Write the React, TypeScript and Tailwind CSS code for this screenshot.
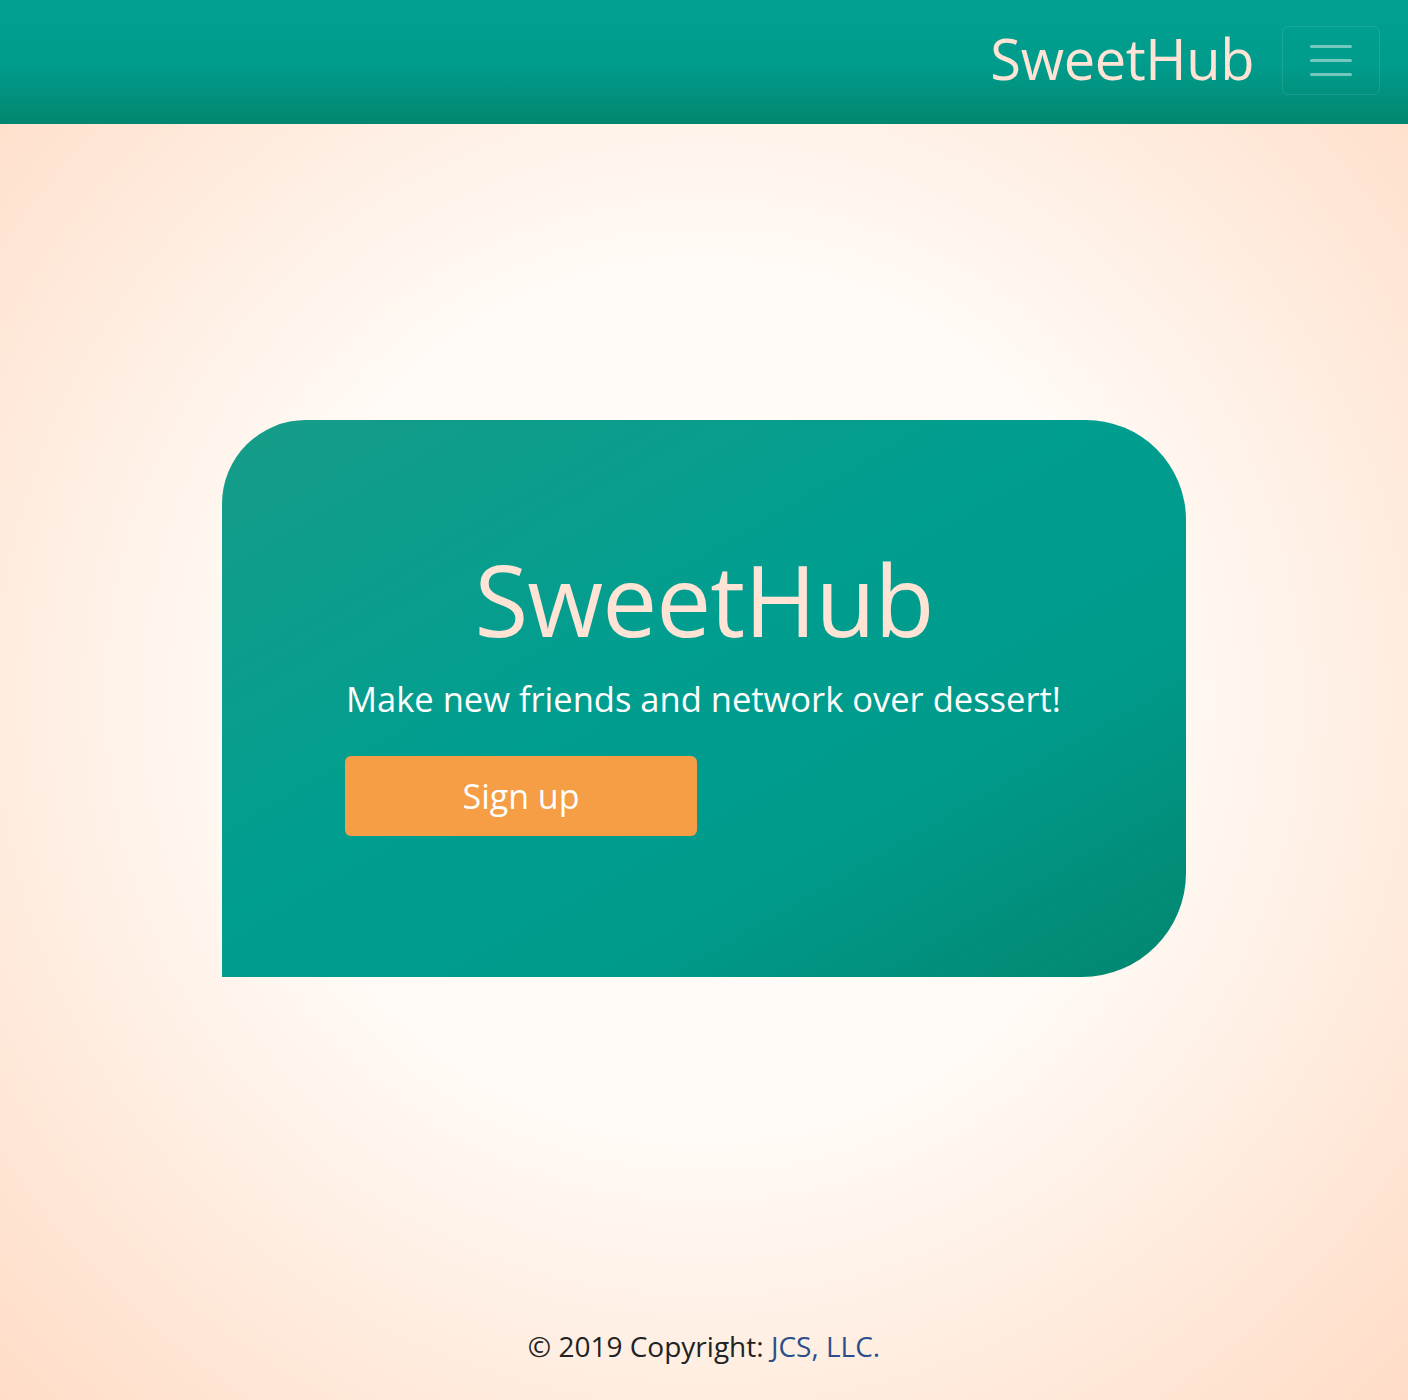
export default function App() {
  return (
    <div
      className="min-h-[1400px] flex flex-col bg-[radial-gradient(ellipse_at_center,#fffcf9_0%,#fffaf5_45%,#ffdcc6_100%)]"
      style={{ fontFamily: '"Open Sans", "Noto Sans", sans-serif' }}
    >
      {/* Navbar */}
      <header className="h-[124px] bg-[linear-gradient(to_bottom,#00a192_0%,#009b8b_55%,#03866f_100%)] flex items-center justify-end pr-7">
        <span className="text-[#ffe4d6] text-[56px] leading-none tracking-[-0.4px] mr-[28px] -mt-2">SweetHub</span>
        <button className="w-[98px] h-[69px] -mt-[3px] rounded-md border border-white/10 flex flex-col items-center justify-center gap-[11px]">
          <span className="block w-[42px] h-[3px] rounded-full bg-white/45" />
          <span className="block w-[42px] h-[3px] rounded-full bg-white/45" />
          <span className="block w-[42px] h-[3px] rounded-full bg-white/45" />
        </button>
      </header>

      {/* Hero */}
      <main className="flex-1 flex justify-center pt-[296px]">
        <div className="w-[964px] h-[557px] rounded-tl-[84px] rounded-tr-[100px] rounded-br-[104px] bg-[linear-gradient(150deg,#169c88_0%,#009e90_45%,#009a8a_70%,#03866f_100%)] pl-[124px] pr-[60px] pt-[130px]">
          <h1 className="text-center text-[#ffe4d6] text-[98px] leading-none tracking-[-1px] pr-[64px]">SweetHub</h1>
          <p className="text-white text-[34.5px] leading-none mt-[34px] whitespace-nowrap">Make new friends and network over dessert!</p>
          <button className="mt-[39px] -ml-px w-[352px] h-[80px] rounded-md bg-[#f59e45] text-white text-[34px] leading-none">
            Sign up
          </button>
        </div>
      </main>

      {/* Footer */}
      <footer className="h-[100px] flex justify-center pt-[25px] text-[28px] text-[#222]">
        <span>
          © 2019 Copyright: <a className="text-[#2c4f8c]">JCS, LLC.</a>
        </span>
      </footer>
    </div>
  );
}
